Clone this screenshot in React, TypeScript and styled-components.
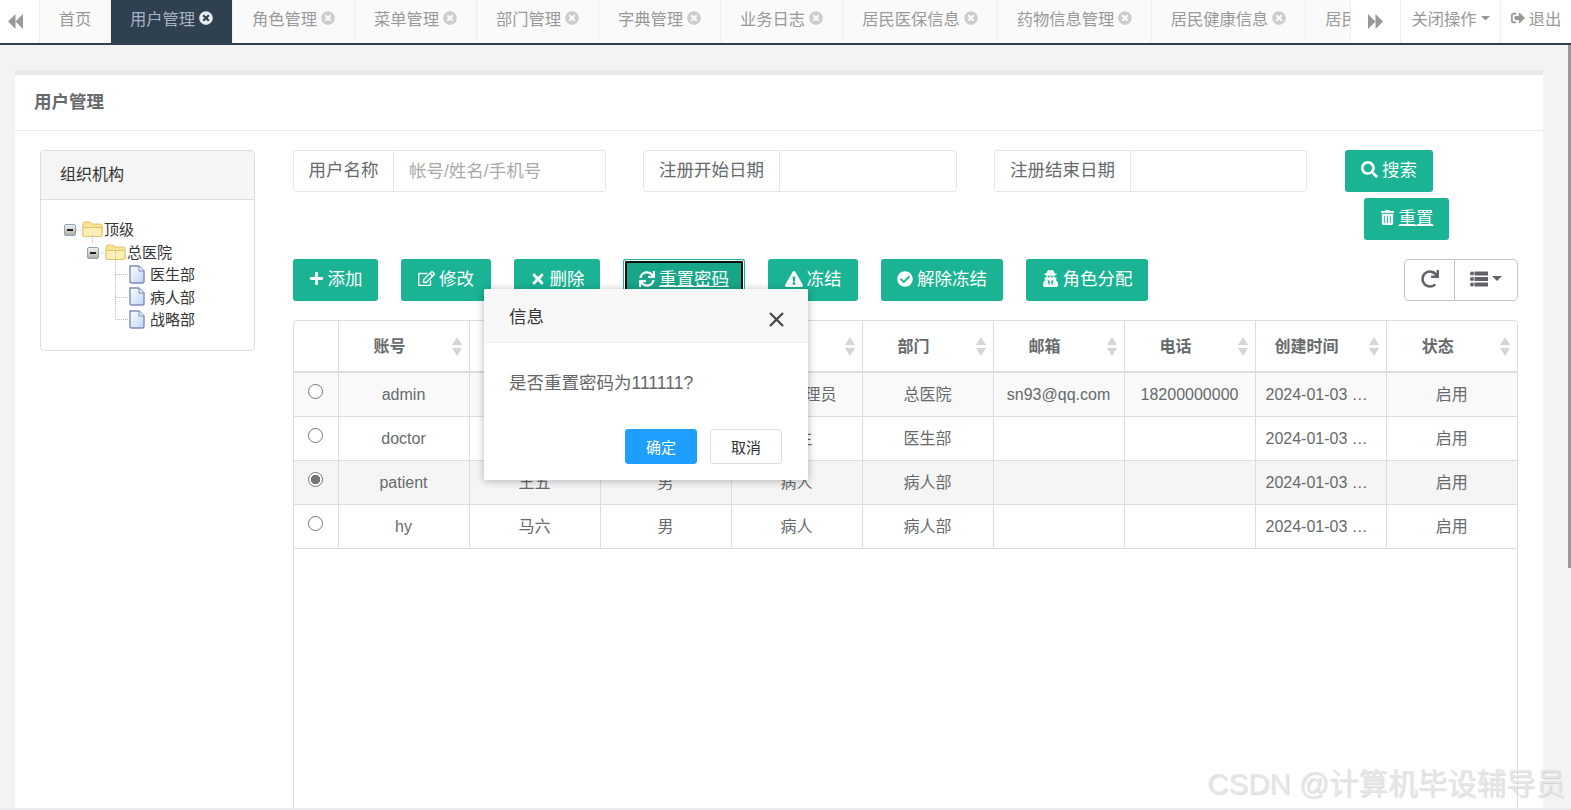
import React from "react";
import styled, { createGlobalStyle } from "styled-components";
import {
  FaTimesCircle, FaSignOutAlt, FaPlus, FaRegEdit, FaTimes, FaSync,
  FaExclamationTriangle, FaCheckCircle, FaUserSecret, FaSearch, FaTrashAlt, FaRedo,
} from "react-icons/fa";

const GlobalStyle = createGlobalStyle`
  html, body { margin: 0; padding: 0; height: 810px; overflow: hidden; background: #f3f3f4; }
  body { font-family: "Liberation Sans", "Noto Sans CJK SC", sans-serif; color: #676a6c; font-size: 16px; }
  * { box-sizing: border-box; }
`;

const Page = styled.div`
  position: relative;
  height: 810px;
  overflow: hidden;
  display: flex;
  flex-direction: column;
`;

/* ---------- tab bar ---------- */
const TabBar = styled.div`
  flex: none;
  height: 45px;
  display: flex;
  background: #fff;
  border-bottom: 2px solid #2f4050;
`;
const NavButton = styled.div<{ $w: number; $bl?: boolean; $text?: boolean; $pr?: number }>`
  flex: none;
  width: ${(p) => p.$w}px;
  display: flex;
  align-items: center;
  justify-content: center;
  gap: 4px;
  padding-bottom: ${(p) => (p.$text ? 7 : 0)}px;
  padding-right: ${(p) => p.$pr ?? 0}px;
  color: #999;
  font-size: 16.3px;
  white-space: nowrap;
  background: #fff;
  border-left: ${(p) => (p.$bl ? "1px solid #eee" : "none")};
  svg { flex: none; }
`;
const TabStrip = styled.div`
  flex: 1;
  min-width: 0;
  display: flex;
  overflow: hidden;
  border-left: 1px solid #eee;
`;
const Tab = styled.div<{ $w: number; $active?: boolean }>`
  flex: none;
  width: ${(p) => p.$w}px;
  display: flex;
  align-items: center;
  justify-content: ${(p) => (p.$w < 60 ? "flex-start" : "center")};
  padding-left: ${(p) => (p.$w < 60 ? 18 : 0)}px;
  padding-bottom: 7px;
  gap: 4px;
  font-size: 16.3px;
  white-space: nowrap;
  overflow: hidden;
  color: ${(p) => (p.$active ? "#a7b1c2" : "#999")};
  background: ${(p) => (p.$active ? "#2f4050" : "#fafafa")};
  border-right: 1px solid #eee;
  svg { color: ${(p) => (p.$active ? "#e8ebef" : "#ccc")}; flex: none; }
`;

/* ---------- panel ---------- */
const Main = styled.div`
  flex: 1;
  min-height: 0;
  overflow: hidden;
  padding: 25px 28px 0 15px;
`;
const BottomEdge = styled.div`
  flex: none;
  height: 2px;
  background: #e8ecf0;
`;
const Panel = styled.div`
  height: 800px;
  background: #fff;
  border-top: 5px solid #e7eaec;
`;
const PanelTitle = styled.div`
  height: 56px;
  padding: 0 0 4px 19px;
  display: flex;
  align-items: center;
  font-size: 17.5px;
  font-weight: 700;
  color: #676a6c;
  border-bottom: 1px solid #e7eaec;
`;
const PanelBody = styled.div`
  display: grid;
  grid-template-columns: 215px 1225px;
  column-gap: 38px;
  padding: 19px 0 0 25px;
`;

/* ---------- org tree ---------- */
const OrgCard = styled.div`
  height: 201px;
  border: 1px solid #ddd;
  border-radius: 4px;
  overflow: hidden;
`;
const OrgHeader = styled.div`
  height: 49px;
  padding: 0 0 4px 19px;
  display: flex;
  align-items: center;
  background: #f5f5f5;
  border-bottom: 1px solid #ddd;
  color: #333;
  font-size: 16px;
`;
const TreeBox = styled.div`
  padding: 18px 0 0 23px;
`;
const TreeRow = styled.div<{ $indent: number }>`
  position: relative;
  height: 22.5px;
  display: flex;
  align-items: center;
  padding-left: ${(p) => p.$indent}px;
  font-size: 15px;
  color: #333;
  white-space: nowrap;
`;
const TreeText = styled.span<{ $gap: number }>`
  margin-left: ${(p) => p.$gap}px;
  margin-top: -1px;
`;
const TreeConnector = styled.span`
  position: absolute;
  left: 51px;
  top: -12px;
  height: 24px;
  width: 13px;
  border-left: 1px dotted #bbb;
  border-bottom: 1px dotted #bbb;
`;
const TreeStub = styled.span`
  position: absolute;
  left: 28px;
  top: -6px;
  height: 8px;
  border-left: 1px dotted #bbb;
`;

const ExpandIcon = () => (
  <svg width="18" height="12" viewBox="0 0 18 12" style={{ flex: "none", marginTop: 2 }}>
    <defs>
      <linearGradient id="eg" x1="0" y1="0" x2="0" y2="1">
        <stop offset="0" stopColor="#f4f4f0" />
        <stop offset="1" stopColor="#b0ad9e" />
      </linearGradient>
    </defs>
    <rect x="0.5" y="0.5" width="11" height="11" rx="1.5" fill="url(#eg)" stroke="#8ba3bd" />
    <rect x="3" y="5" width="6" height="2" fill="#222" />
    <line x1="12" y1="6" x2="18" y2="6" stroke="#ccc" strokeDasharray="1 1" />
  </svg>
);
const FolderIcon = () => (
  <svg width="21" height="16" viewBox="0 0 21 16" style={{ flex: "none" }}>
    <path d="M1 14V3Q1 1 3 1H8L10 3H18Q20 3 20 5V14Q20 15.5 18.5 15.5H2.5Q1 15.5 1 14Z" fill="#f8e394" stroke="#e2c26a" />
    <path d="M1 6.5H20V14Q20 15.5 18.5 15.5H2.5Q1 15.5 1 14Z" fill="#fcefb4" stroke="#e2c26a" />
  </svg>
);
const FileIcon = () => (
  <svg width="16" height="19" viewBox="0 0 16 19" style={{ flex: "none" }}>
    <defs>
      <linearGradient id="fg" x1="0" y1="0" x2="1" y2="1">
        <stop offset="0" stopColor="#ffffff" />
        <stop offset="1" stopColor="#bcd4f4" />
      </linearGradient>
    </defs>
    <path d="M1 1H10L15 6V16.5Q15 18 13.5 18H2.5Q1 18 1 16.5Z" fill="url(#fg)" stroke="#7f8abd" strokeWidth="1.4" />
    <path d="M10 1V6H15" fill="#e6eefb" stroke="#7f8abd" />
  </svg>
);

/* drawn glyphs that the icon packages do not match */
const DoubleArrow = ({ dir }: { dir: "left" | "right" }) => (
  <svg width="15" height="15" viewBox="0 0 15 15">
    <path
      d={dir === "left" ? "M7.5 0V15L0 7.5Z M15 0V15L7.5 7.5Z" : "M0 0V15L7.5 7.5Z M7.5 0V15L15 7.5Z"}
      fill="currentColor"
    />
  </svg>
);
const Caret = ({ w = 9 }: { w?: number }) => (
  <svg width={w} height={w / 2} viewBox="0 0 10 5">
    <path d="M0 0H10L5 5Z" fill="currentColor" />
  </svg>
);
const ListGlyph = () => (
  <svg width="18" height="16" viewBox="0 0 18 16">
    <g fill="currentColor">
      <circle cx="2" cy="2.5" r="2" />
      <circle cx="2" cy="8" r="2" />
      <circle cx="2" cy="13.5" r="2" />
      <rect x="4.5" y="0.5" width="13.5" height="4" rx="0.5" />
      <rect x="4.5" y="6" width="13.5" height="4" rx="0.5" />
      <rect x="4.5" y="11.5" width="13.5" height="4" rx="0.5" />
    </g>
  </svg>
);

/* ---------- search ---------- */
const Content = styled.div`
  min-width: 0;
`;
const SearchRow = styled.div`
  display: flex;
  gap: 37px;
`;
const Field = styled.div<{ $w: number; $label: number }>`
  width: ${(p) => p.$w}px;
  height: 42px;
  display: grid;
  grid-template-columns: ${(p) => p.$label}px 1fr;
  border: 1px solid #e5e6e7;
  border-radius: 3px;
  font-size: 17.5px;
`;
const FieldLabel = styled.label`
  display: flex;
  align-items: center;
  justify-content: center;
  padding-bottom: 5px;
  border-right: 1px solid #e5e6e7;
  color: #676a6c;
`;
const FieldInput = styled.input`
  min-width: 0;
  border: none;
  outline: none;
  background: transparent;
  padding: 0 15px;
  font: inherit;
  color: #676a6c;
  &::placeholder { color: #aaa; opacity: 1; }
`;
const SearchAction = styled.div`
  margin-left: 1px;
`;
const ResetRow = styled.div`
  margin: 6px 0 19px 1071px;
`;
const GreenButton = styled.button<{ $w: number; $focus?: boolean; $under?: boolean }>`
  flex: none;
  width: ${(p) => p.$w}px;
  height: 42px;
  padding: 0;
  display: inline-flex;
  align-items: center;
  justify-content: center;
  gap: 4px;
  border: none;
  border-radius: 3px;
  color: #fff;
  font: inherit;
  font-size: 17.5px;
  white-space: nowrap;
  background: ${(p) => (p.$focus ? "#18a689" : "#1ab394")};
  box-shadow: ${(p) => (p.$focus ? "inset 0 0 0 1px #1ab394, inset 0 0 0 2px #fff, inset 0 0 0 4px #111" : "none")};
  svg { margin-top: -3px; }
  span {
    margin-top: -6px;
    text-decoration: ${(p) => (p.$under ? "underline" : "none")};
    text-underline-offset: 1px;
  }
`;

/* ---------- toolbar ---------- */
const Toolbar = styled.div`
  display: flex;
  gap: 23px;
  margin-bottom: 19px;
`;
const RightGroup = styled.div`
  margin-left: auto;
  height: 42px;
  display: flex;
  border: 1px solid #c2c2c2;
  border-radius: 5px;
  color: #5f6368;
`;
const GroupCell = styled.div<{ $w: number; $border?: boolean }>`
  width: ${(p) => p.$w}px;
  display: flex;
  align-items: center;
  justify-content: center;
  gap: 4px;
  padding-bottom: 3px;
  border-left: ${(p) => (p.$border ? "1px solid #c2c2c2" : "none")};
`;

/* ---------- table ---------- */
const TableWrap = styled.div`
  height: 520px;
  border: 1px solid #ddd;
  border-radius: 4px;
  overflow: hidden;
`;
const DataTable = styled.table`
  width: 1223px;
  table-layout: fixed;
  border-collapse: collapse;
  font-size: 16px;
`;
const HeadCell = styled.th`
  position: relative;
  height: 51px;
  padding: 0 28px 2px 0;
  font-weight: 700;
  text-align: center;
  color: #676a6c;
  border-right: 1px solid #ddd;
  border-bottom: 2px solid #ddd;
  &:first-child { padding: 0; }
  &:last-child { border-right: none; }
`;
const SortMark = styled.svg`
  position: absolute;
  right: 7px;
  top: 16px;
`;
const Row = styled.tr<{ $bg: string }>`
  background: ${(p) => p.$bg};
`;
const Cell = styled.td<{ $left?: boolean; $cjk?: boolean }>`
  height: 44px;
  padding: ${(p) => (p.$cjk ? "0 8px 2px" : p.$left ? "2px 16px 0 10px" : "2px 8px 0")};
  text-align: ${(p) => (p.$left ? "left" : "center")};
  white-space: nowrap;
  overflow: hidden;
  text-overflow: ellipsis;
  color: #676a6c;
  border-right: 1px solid #ddd;
  border-bottom: 1px solid #ddd;
  &:last-child { border-right: none; }
`;
const Radio = styled.input`
  appearance: none;
  display: block;
  width: 15px;
  height: 15px;
  margin: -8px auto 0;
  border: 1px solid #767676;
  border-radius: 50%;
  background: #fff;
  &:checked { background: radial-gradient(circle, #757575 0 4.5px, #fff 5px); }
`;

/* ---------- dialog ---------- */
const Dialog = styled.div`
  position: absolute;
  left: 484px;
  top: 289px;
  width: 324px;
  height: 191px;
  background: #fff;
  border-radius: 2px;
  box-shadow: 0 1px 8px rgba(0, 0, 0, 0.28);
`;
const DialogHead = styled.div`
  height: 54px;
  padding: 0 24px 0 25px;
  display: flex;
  align-items: center;
  justify-content: space-between;
  background: #f8f8f8;
  border-bottom: 1px solid #eee;
  border-radius: 2px 2px 0 0;
  font-size: 17.5px;
  color: #333;
  svg { margin-top: 7px; }
`;
const DialogBody = styled.div`
  height: 86px;
  padding: 26px 25px 0;
  font-size: 17.5px;
  color: #666;
`;
const DialogFoot = styled.div`
  display: flex;
  justify-content: flex-end;
  gap: 13px;
  padding-right: 26px;
`;
const DialogBtn = styled.button<{ $primary?: boolean }>`
  width: 72px;
  height: 35px;
  padding: 0;
  border: 1px solid ${(p) => (p.$primary ? "#1e9fff" : "#dedede")};
  border-radius: 3px;
  font: inherit;
  font-size: 15px;
  color: ${(p) => (p.$primary ? "#fff" : "#333")};
  background: ${(p) => (p.$primary ? "#1e9fff" : "#fff")};
`;

const Watermark = styled.div`
  position: absolute;
  right: 6px;
  bottom: 9px;
  font-size: 29.5px;
  line-height: 34px;
  color: #e6e6e6;
  white-space: nowrap;
  text-shadow: 1px 1px 1px rgba(0, 0, 0, 0.14);
`;
const ScrollThumb = styled.div`
  position: absolute;
  top: 45px;
  right: 0;
  width: 3px;
  height: 523px;
  background: #999;
`;

const tabs = [
  ["首页", 71, false, false],
  ["用户管理", 122, true, true],
  ["角色管理", 122, false, true],
  ["菜单管理", 122, false, true],
  ["部门管理", 122, false, true],
  ["字典管理", 122, false, true],
  ["业务日志", 122, false, true],
  ["居民医保信息", 155, false, true],
  ["药物信息管理", 154, false, true],
  ["居民健康信息", 154, false, true],
  ["居民档案信息", 155, false, true],
] as const;

const heads = ["", "账号", "姓名", "性别", "角色", "部门", "邮箱", "电话", "创建时间", "状态"];
const widths = [44, 131, 131, 131, 131, 131, 131, 131, 131, 131];
const rows = [
  { bg: "#f9f9f9", a: "admin", n: "张三", s: "男", r: "超级管理员", d: "总医院", m: "sn93@qq.com", p: "18200000000", c: false },
  { bg: "#fff", a: "doctor", n: "李四", s: "男", r: "医生", d: "医生部", m: "", p: "", c: false },
  { bg: "#f5f5f5", a: "patient", n: "王五", s: "男", r: "病人", d: "病人部", m: "", p: "", c: true },
  { bg: "#fff", a: "hy", n: "马六", s: "男", r: "病人", d: "病人部", m: "", p: "", c: false },
];

export default function App() {
  return (
    <Page>
      <GlobalStyle />
      <TabBar>
        <NavButton $w={39} $pr={9}><DoubleArrow dir="left" /></NavButton>
        <TabStrip>
          {tabs.map(([t, w, active, close], i) => (
            <Tab key={i} $w={w} $active={active}>
              {t}
              {close && <FaTimesCircle size={14} />}
            </Tab>
          ))}
        </TabStrip>
        <NavButton $w={50} $bl><DoubleArrow dir="right" /></NavButton>
        <NavButton $w={100} $bl $text>关闭操作<Caret /></NavButton>
        <NavButton $w={71} $bl $text><FaSignOutAlt size={14} />退出</NavButton>
      </TabBar>
      <Main>
        <Panel>
          <PanelTitle>用户管理</PanelTitle>
          <PanelBody>
            <OrgCard>
              <OrgHeader>组织机构</OrgHeader>
              <TreeBox>
                <TreeRow $indent={0}><ExpandIcon /><FolderIcon /><TreeText $gap={1}>顶级</TreeText></TreeRow>
                <TreeRow $indent={23}><TreeStub /><ExpandIcon /><FolderIcon /><TreeText $gap={1}>总医院</TreeText></TreeRow>
                <TreeRow $indent={65}><TreeConnector /><FileIcon /><TreeText $gap={5}>医生部</TreeText></TreeRow>
                <TreeRow $indent={65}><TreeConnector /><FileIcon /><TreeText $gap={5}>病人部</TreeText></TreeRow>
                <TreeRow $indent={65}><TreeConnector /><FileIcon /><TreeText $gap={5}>战略部</TreeText></TreeRow>
              </TreeBox>
            </OrgCard>
            <Content>
              <SearchRow>
                <Field $w={313} $label={100}>
                  <FieldLabel>用户名称</FieldLabel>
                  <FieldInput placeholder="帐号/姓名/手机号" />
                </Field>
                <Field $w={314} $label={136}>
                  <FieldLabel>注册开始日期</FieldLabel>
                  <FieldInput />
                </Field>
                <Field $w={313} $label={136}>
                  <FieldLabel>注册结束日期</FieldLabel>
                  <FieldInput />
                </Field>
                <SearchAction>
                  <GreenButton $w={88}><FaSearch size={17} /><span>搜索</span></GreenButton>
                </SearchAction>
              </SearchRow>
              <ResetRow>
                <GreenButton $w={85} $under><FaTrashAlt size={15} /><span>重置</span></GreenButton>
              </ResetRow>
              <Toolbar>
                <GreenButton $w={85}><FaPlus size={15} /><span>添加</span></GreenButton>
                <GreenButton $w={90}><FaRegEdit size={17} /><span>修改</span></GreenButton>
                <GreenButton $w={86}><FaTimes size={16} /><span>删除</span></GreenButton>
                <GreenButton $w={122} $focus $under><FaSync size={16} /><span>重置密码</span></GreenButton>
                <GreenButton $w={90}><FaExclamationTriangle size={18} /><span>冻结</span></GreenButton>
                <GreenButton $w={122}><FaCheckCircle size={16} /><span>解除冻结</span></GreenButton>
                <GreenButton $w={122}><FaUserSecret size={17} /><span>角色分配</span></GreenButton>
                <RightGroup>
                  <GroupCell $w={49}><FaRedo size={18} /></GroupCell>
                  <GroupCell $w={63} $border><ListGlyph /><Caret w={10} /></GroupCell>
                </RightGroup>
              </Toolbar>
              <TableWrap>
                <DataTable>
                  <colgroup>
                    {widths.map((w, i) => <col key={i} style={{ width: w }} />)}
                  </colgroup>
                  <thead>
                    <tr>
                      {heads.map((h, i) => (
                        <HeadCell key={i}>
                          {h}
                          {h && (
                            <SortMark width="10" height="19" viewBox="0 0 10 19">
                              <path d="M5 0L10 8H0Z M0 11H10L5 19Z" fill="#d5d5d5" />
                            </SortMark>
                          )}
                        </HeadCell>
                      ))}
                    </tr>
                  </thead>
                  <tbody>
                    {rows.map((r) => (
                      <Row key={r.a} $bg={r.bg}>
                        <Cell><Radio type="radio" readOnly checked={r.c} /></Cell>
                        <Cell>{r.a}</Cell>
                        <Cell $cjk>{r.n}</Cell>
                        <Cell $cjk>{r.s}</Cell>
                        <Cell $cjk>{r.r}</Cell>
                        <Cell $cjk>{r.d}</Cell>
                        <Cell>{r.m}</Cell>
                        <Cell>{r.p}</Cell>
                        <Cell $left>2024-01-03 10:20:30</Cell>
                        <Cell $cjk>启用</Cell>
                      </Row>
                    ))}
                  </tbody>
                </DataTable>
              </TableWrap>
            </Content>
          </PanelBody>
        </Panel>
      </Main>
      <BottomEdge />
      <Dialog>
        <DialogHead>
          信息
          <svg width="15" height="15" viewBox="0 0 15 15">
            <path d="M1 1L14 14M14 1L1 14" stroke="#444" strokeWidth="2.2" />
          </svg>
        </DialogHead>
        <DialogBody>是否重置密码为111111?</DialogBody>
        <DialogFoot>
          <DialogBtn $primary>确定</DialogBtn>
          <DialogBtn>取消</DialogBtn>
        </DialogFoot>
      </Dialog>
      <Watermark>CSDN @计算机毕设辅导员</Watermark>
      <ScrollThumb />
    </Page>
  );
}
